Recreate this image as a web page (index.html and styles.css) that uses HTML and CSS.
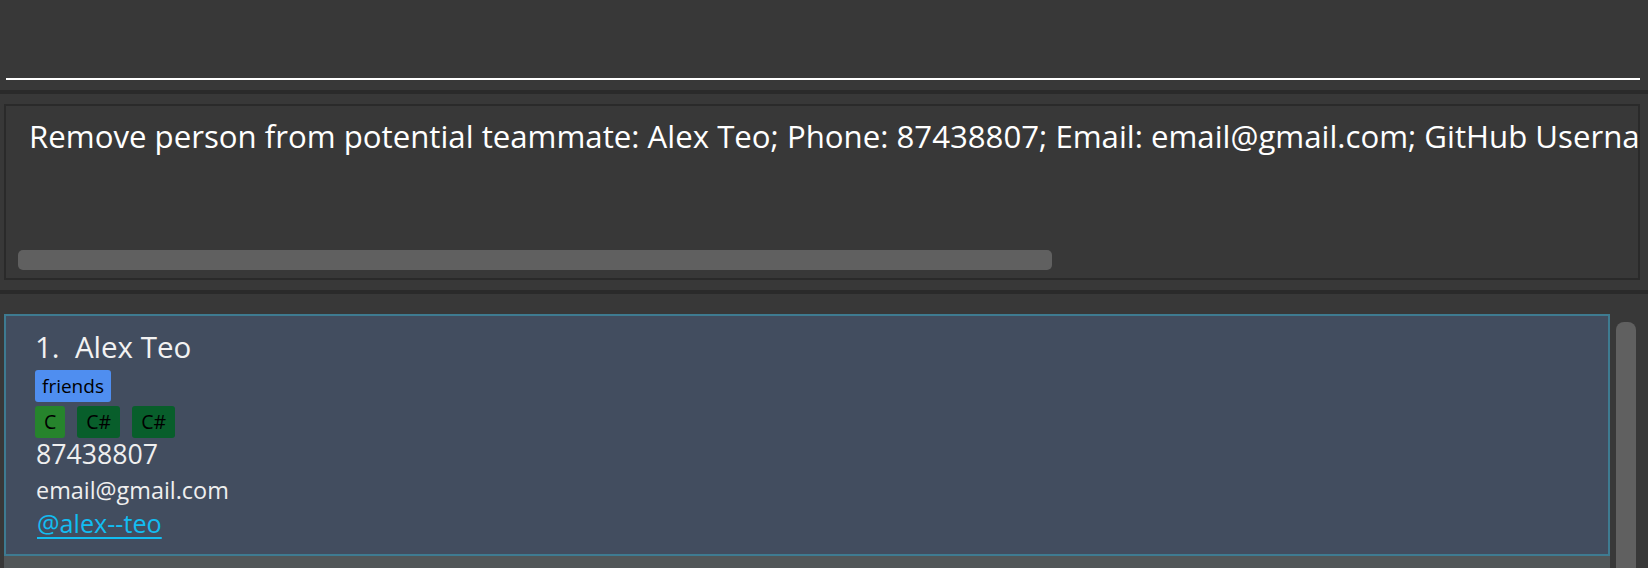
FILE: index.html
```html
<!DOCTYPE html>
<html lang="en">
<head>
<meta charset="utf-8">
<title>Address Book</title>
<link rel="stylesheet" href="styles.css">
</head>
<body>
<div class="app">
  <div class="command-pane">
    <div class="command-field"></div>
  </div>
  <div class="divider"></div>
  <div class="result-pane">
    <div class="result-box">
      <div class="result-text">Remove person from potential teammate: Alex Teo; Phone: 87438807; Email: email@gmail.com; GitHub Username: alex--teo; Tags: [friends]</div>
      <div class="h-thumb"></div>
    </div>
  </div>
  <div class="divider"></div>
  <div class="list-pane">
    <div class="list">
      <div class="card">
        <div class="name">1.&nbsp; Alex Teo</div>
        <div class="tags">
          <span class="tag tag-blue">friends</span>
        </div>
        <div class="tags tags-lang">
          <span class="tag tag-green">C</span>
          <span class="tag tag-dark">C#</span>
          <span class="tag tag-dark">C#</span>
        </div>
        <div class="phone">87438807</div>
        <div class="email">email@gmail.com</div>
        <div class="github"><a class="gh-link" href="#">@alex--teo</a></div>
      </div>
      <div class="cell-odd"></div>
    </div>
    <div class="v-scroll">
      <div class="v-thumb"></div>
    </div>
  </div>
</div>
</body>
</html>
```

FILE: styles.css
```css
* {
  box-sizing: border-box;
}

html, body {
  margin: 0;
  padding: 0;
  background: #383838;
}

body {
  width: 1648px;
  height: 568px;
  overflow: hidden;
  font-family: "Open Sans", "Noto Sans", sans-serif;
  color: #ffffff;
}

.app {
  display: flex;
  flex-direction: column;
  width: 1648px;
  height: 568px;
}

/* command box */
.command-pane {
  height: 90px;
  padding: 0 8px 10px 6px;
  display: flex;
  align-items: flex-end;
}

.command-field {
  width: 100%;
  height: 80px;
  border-bottom: 2px solid #ffffff;
}

.divider {
  height: 4px;
  background: #2a2a2a;
  flex: none;
}

/* result display */
.result-pane {
  height: 196px;
  padding: 10px 8px 10px 4px;
  flex: none;
}

.result-box {
  height: 100%;
  border: 2px solid #2a2a2a;
  display: flex;
  flex-direction: column;
  overflow: hidden;
}

.result-text {
  padding: 10px 0 0 23px;
  font-size: 31.2px;
  line-height: 40px;
  white-space: nowrap;
  overflow: hidden;
  color: #ffffff;
}

.h-thumb {
  margin: auto 0 8px 12px;
  width: 1034px;
  height: 20px;
  border-radius: 5px;
  background: #606060;
  flex: none;
}

/* list */
.list-pane {
  flex: 1;
  display: flex;
  overflow: hidden;
}

.list {
  width: 1610px;
  padding: 20px 0 0 4px;
  display: flex;
  flex-direction: column;
}

.card {
  height: 242px;
  flex: none;
  background: #424d5f;
  border: 2px solid #3e7b91;
  padding: 12px 0 0 29px;
  display: flex;
  flex-direction: column;
  align-items: flex-start;
}

.cell-odd {
  flex: 1;
  background: #515658;
}

.name {
  font-size: 29.5px;
  line-height: 37px;
  color: #f2f2f2;
}

.tags {
  display: flex;
  gap: 14px;
  margin-top: 5px;
}

.tags-lang {
  margin-top: 4px;
  gap: 12px;
}

.tag {
  font-size: 19px;
  line-height: 26px;
  padding: 3px 7px;
  border-radius: 3px;
  color: #000000;
}

.tags-lang .tag {
  font-size: 19.5px;
  padding: 3px 9px;
}

.tag-blue {
  background: #4f8ef0;
}

.tag-green {
  background: #26842c;
}

.tag-dark {
  background: #085e2b;
}

.phone {
  margin-top: 1px;
  padding-left: 1px;
  font-size: 26.7px;
  line-height: 30px;
  color: #efefef;
}

.email {
  margin-top: 6px;
  padding-left: 1px;
  font-size: 23.4px;
  line-height: 30px;
  color: #efefef;
}

.github {
  margin-top: 3px;
  font-size: 25.2px;
  line-height: 30px;
  padding-left: 2px;
}

.gh-link {
  color: #12bdf2;
  text-decoration: underline;
  text-decoration-thickness: 1.5px;
  text-underline-offset: 4px;
}

/* vertical scrollbar */
.v-scroll {
  width: 20px;
  margin-left: 6px;
  padding-top: 28px;
  flex: none;
}

.v-thumb {
  width: 20px;
  height: 300px;
  border-radius: 8px;
  background: #606060;
}
```
